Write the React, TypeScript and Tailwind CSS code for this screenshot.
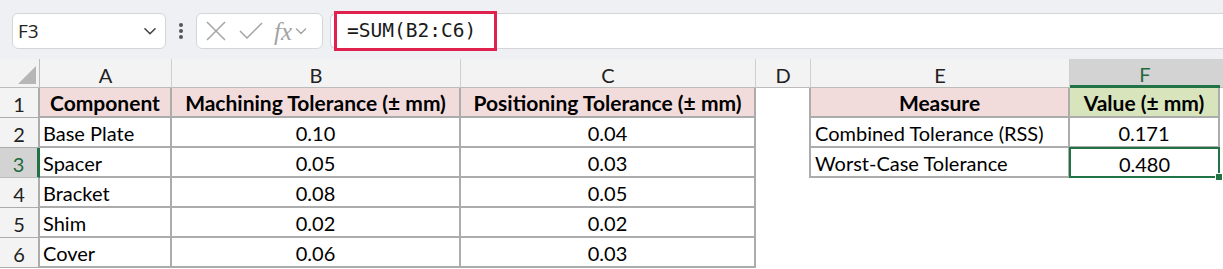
import React from 'react';

const cols = ['A', 'B', 'C', 'D', 'E', 'F'];

const parts = [
    { name: 'Base Plate', mach: '0.10', pos: '0.04' },
    { name: 'Spacer', mach: '0.05', pos: '0.03' },
    { name: 'Bracket', mach: '0.08', pos: '0.05' },
    { name: 'Shim', mach: '0.02', pos: '0.02' },
    { name: 'Cover', mach: '0.06', pos: '0.03' },
];

const summary = [
    { label: 'Combined Tolerance (RSS)', value: '0.171' },
    { label: 'Worst-Case Tolerance', value: '0.480' },
];

const Chevron = ({ className }: { className?: string }) => (
    <svg className={className} viewBox="0 0 16 16" fill="none" stroke="currentColor" strokeWidth={1.4}>
        <path d="M3.5 6l4.5 4.5L12.5 6" strokeLinecap="round" strokeLinejoin="round" />
    </svg>
);

const Toolbar: React.FC = () => (
    <div className="flex h-[59px] items-start bg-[#eef0f3] pl-[12px] pt-[13px]">
        {/* name box */}
        <div className="flex h-[36px] w-[154px] items-center justify-between rounded-[6px] border border-[#d3d5d8] bg-white pl-[5px] pr-[6px]">
            <span className="text-[19px] text-[#222]" style={{ fontFamily: '"Open Sans", sans-serif' }}>F3</span>
            <Chevron className="h-[18px] w-[18px] text-[#444]" />
        </div>

        {/* more menu dots */}
        <div className="flex h-[36px] w-[30px] flex-col items-center justify-center gap-[2px]">
            <span className="h-[4px] w-[4px] rounded-full bg-[#555]" />
            <span className="h-[4px] w-[4px] rounded-full bg-[#555]" />
            <span className="h-[4px] w-[4px] rounded-full bg-[#555]" />
        </div>

        {/* cancel / enter / fx */}
        <div className="flex h-[36px] w-[127px] items-center rounded-[6px] border border-[#d3d5d8] bg-white pl-[8px] text-[#a3a3a3]">
            <svg className="h-[22px] w-[22px]" viewBox="0 0 22 22" fill="none" stroke="currentColor" strokeWidth={1.5}>
                <path d="M2 2l18 18M20 2L2 20" />
            </svg>
            <svg className="ml-[12px] h-[22px] w-[24px]" viewBox="0 0 24 22" fill="none" stroke="currentColor" strokeWidth={1.5}>
                <path d="M1 11l7 7L23 3" />
            </svg>
            <span
                className="ml-[11px] text-[25px] italic leading-none"
                style={{ fontFamily: '"Liberation Serif", serif' }}
            >
                fx
            </span>
            <Chevron className="ml-[1px] h-[16px] w-[16px]" />
        </div>

        {/* formula input */}
        <div className="ml-[7px] flex h-[36px] flex-1 items-center rounded-l-[6px] border-y border-l border-[#d3d5d8] bg-white pl-[3px]">
            <div className="-my-[2px] flex h-[40px] w-[163px] items-center border-[3px] border-[#e0204d] pl-[10px]">
                <span className="text-[19.5px] text-[#1a1a1a]" style={{ fontFamily: '"DejaVu Sans Mono", monospace' }}>
                    =SUM(B2:C6)
                </span>
            </div>
        </div>
    </div>
);

const line = 'border-[#acacac]';

const App: React.FC = () => {
    return (
        <div className="h-[269px] w-[1223px] overflow-hidden bg-white" style={{ fontFamily: 'Lato, sans-serif' }}>
            <Toolbar />

            <div className="grid grid-cols-[40px_132px_289px_295px_55px_259px_150px_1fr] grid-rows-[29px_30px_30px_30px_30px_30px_30px] text-[20px] text-black">
                {/* header row */}
                <div className="relative border-r border-b border-[#bcbcbc] bg-[#f3f3f3]">
                    <div className="absolute right-[3px] bottom-[3px] h-0 w-0 border-b-[18px] border-l-[18px] border-b-[#b6b6b6] border-l-transparent" />
                </div>
                {cols.map((c) =>
                    c === 'F' ? (
                        <div key={c} className="flex items-center justify-center border-b-[3px] border-[#217346] bg-[#d3d3d3] pt-[3px] text-[#1e6b40]">
                            {c}
                        </div>
                    ) : (
                        <div key={c} className="flex items-center justify-center border-r border-b border-r-[#cfcfcf] border-b-[#bcbcbc] bg-[#f3f3f3] pt-[3px] text-[#222]">
                            {c}
                        </div>
                    )
                )}
                <div className="border-b border-[#bcbcbc] bg-[#d3d3d3]" />

                {/* row 1 */}
                <div className={`flex items-center justify-center border-r-2 border-b ${line} bg-[#f3f3f3] pt-[2px] text-[#222]`}>1</div>
                <div className={`flex items-center justify-center border-r-2 border-b-2 ${line} bg-[#f2dcdb] pt-[2px] text-[21px] font-bold`}>Component</div>
                <div className={`flex items-center justify-center border-r-2 border-b-2 ${line} bg-[#f2dcdb] pt-[2px] text-[21px] font-bold`}>Machining Tolerance (± mm)</div>
                <div className={`flex items-center justify-center border-r-2 border-b-2 ${line} bg-[#f2dcdb] pt-[2px] text-[21px] font-bold`}>Positioning Tolerance (± mm)</div>
                <div className={`border-r-2 ${line}`} />
                <div className={`flex items-center justify-center border-r-2 border-b-2 ${line} bg-[#f2dcdb] pt-[2px] text-[21px] font-bold`}>Measure</div>
                <div className={`flex items-center justify-center border-r-2 border-b-2 ${line} bg-[#d8e4bc] pt-[2px] text-[21px] font-bold`}>Value (± mm)</div>
                <div />

                {/* rows 2-6 */}
                {parts.map((p, i) => {
                    const row = i + 2;
                    const sel = row === 3;
                    const s = summary[i];
                    return (
                        <React.Fragment key={p.name}>
                            <div
                                className={
                                    sel
                                        ? 'flex items-center justify-center border-r-[3px] border-b border-r-[#217346] border-b-[#bcbcbc] bg-[#d3d3d3] pt-[2px] text-[#1e6b40]'
                                        : `flex items-center justify-center border-r-2 border-b ${line} bg-[#f3f3f3] pt-[2px] text-[#222]`
                                }
                            >
                                {row}
                            </div>
                            <div className={`flex items-center border-r-2 border-b-2 ${line} pt-[2px] pl-[3px]`}>{p.name}</div>
                            <div className={`flex items-center justify-center border-r-2 border-b-2 ${line} pt-[2px]`}>{p.mach}</div>
                            <div className={`flex items-center justify-center border-r-2 border-b-2 ${line} pt-[2px]`}>{p.pos}</div>
                            <div className={s ? `border-r-2 ${line}` : ''} />
                            {s ? (
                                <>
                                    <div className={`flex items-center border-r-2 border-b-2 ${line} pt-[2px] pl-[4px]`}>{s.label}</div>
                                    {sel ? (
                                        <div className="relative -mt-[1px] -ml-[1px] flex items-center justify-center border-2 border-[#217346] pt-[2px]">
                                            {s.value}
                                            <span className="absolute -right-[5px] -bottom-[5px] h-[8px] w-[8px] border border-white bg-[#217346]" />
                                        </div>
                                    ) : (
                                        <div className={`flex items-center justify-center border-r-2 border-b-2 ${line} pt-[2px]`}>{s.value}</div>
                                    )}
                                </>
                            ) : (
                                <>
                                    <div />
                                    <div />
                                </>
                            )}
                            <div />
                        </React.Fragment>
                    );
                })}
            </div>
        </div>
    );
};

export default App;
